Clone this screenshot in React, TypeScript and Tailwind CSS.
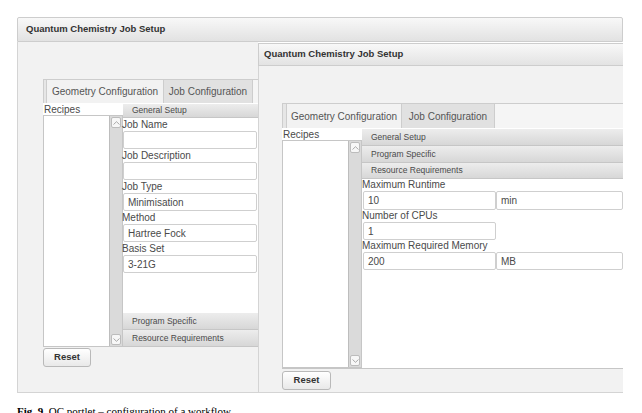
function Chevron({ up }: { up: boolean }) {
    return (
        <svg width="7" height="4" viewBox="0 0 7 4">
            <path d={up ? "M0.5 3.5L3.5 0.7L6.5 3.5" : "M0.5 0.5L3.5 3.3L6.5 0.5"} fill="none" stroke="#a0a0a0" strokeWidth="0.9" />
        </svg>
    )
}

function Scrollbar() {
    return (
        <div className="w-[13px] flex flex-col justify-between bg-[#dadada] border-l border-[#bdbdbd] p-px">
            <div className="h-[11px] rounded-[2px] border border-[#bcbcbc] bg-[#f7f7f7] flex items-center justify-center"><Chevron up /></div>
            <div className="h-[11px] rounded-[2px] border border-[#bcbcbc] bg-[#f7f7f7] flex items-center justify-center"><Chevron up={false} /></div>
        </div>
    )
}

function Recipes() {
    return (
        <div className="w-[80px] shrink-0 flex flex-col pt-px">
            <div className="h-[11px] bg-white text-[10px] leading-[11px] pl-px text-[#4a4a4a]">Recipes</div>
            <div className="flex-1 flex border border-[#c6c6c6] bg-white">
                <div className="flex-1" />
                <Scrollbar />
            </div>
        </div>
    )
}

function Section({ label, className }: { label: string; className: string }) {
    return (
        <div className={`${className} flex items-center pl-[9px] text-[8.5px] text-[#4a4a4a] bg-linear-to-b from-[#ededed] to-[#d7d7d7] border-b border-[#c6c6c6]`}>
            {label}
        </div>
    )
}

function Label({ text }: { text: string }) {
    return <div className="h-[12px] text-[10px] leading-[12px] text-[#4a4a4a] -ml-px">{text}</div>
}

function Input({ value, className }: { value: string; className: string }) {
    return (
        <div className={`${className} h-[18px] border border-[#cfcfcf] rounded-[2px] bg-white text-[10px] text-[#4a4a4a] flex items-center pl-[4px]`}>
            {value}
        </div>
    )
}

function TabStrip({ className, lead, first, second }: { className: string; lead: string; first: string; second: string }) {
    return (
        <div className={`${className} flex border-t border-[#cdcdcd] bg-[#f5f5f5] text-[10px] text-[#555]`}>
            <div className={`${lead} border-l border-r border-[#cdcdcd] bg-[#e6e6e6]`} />
            <div className={`${first} flex items-center justify-center bg-[#f2f2f2] border-r border-[#cdcdcd]`}>Geometry Configuration</div>
            <div className={`${second} flex items-center justify-center bg-[#e1e1e1] border-r border-[#cdcdcd]`}>Job Configuration</div>
            <div className="flex-1" />
        </div>
    )
}

function ResetButton({ className }: { className: string }) {
    return (
        <div className={`${className} h-[19px] rounded-[3px] border border-[#b9b9b9] bg-linear-to-b from-white to-[#e9e9e9] flex items-center justify-center text-[9.5px] font-bold text-[#333]`}>
            Reset
        </div>
    )
}

function LeftWindow() {
    return (
        <div className="w-[241px] shrink-0 bg-[#f2f2f2] border-l border-b border-[#d4d4d4] pl-[25px] pt-[37px] flex flex-col">
            <div className="w-[215px] flex flex-col">
                <TabStrip className="h-[24px]" lead="w-[4px]" first="w-[117px]" second="w-[89px]" />
                <div className="h-[244px] flex bg-white">
                    <Recipes />
                    <div className="flex-1 flex flex-col pt-px">
                        <Section label="General Setup" className="h-[14px]" />
                        <div className="h-[195px] flex flex-col pt-px pr-px">
                            <Label text="Job Name" />
                            <Input value="" className="mb-px" />
                            <Label text="Job Description" />
                            <Input value="" className="mb-px" />
                            <Label text="Job Type" />
                            <Input value="Minimisation" className="mb-px" />
                            <Label text="Method" />
                            <Input value="Hartree Fock" className="mb-px" />
                            <Label text="Basis Set" />
                            <Input value="3-21G" className="mb-px" />
                        </div>
                        <Section label="Program Specific" className="h-[17px]" />
                        <Section label="Resource Requirements" className="h-[17px]" />
                    </div>
                </div>
                <ResetButton className="w-[48px] mt-px" />
            </div>
        </div>
    )
}

function RightWindow() {
    return (
        <div className="flex-1 flex flex-col pt-px bg-white">
            <div className="h-[23px] flex items-center pl-[5px] border-t border-b border-l border-[#cdcdcd] bg-linear-to-b from-[#f8f8f8] to-[#e3e3e3] text-[9.5px] font-bold text-[#333]">
                Quantum Chemistry Job Setup
            </div>
            <div className="flex-1 bg-[#f2f2f2] border-l border-b border-[#d4d4d4] pl-[23px] pt-[37px] flex flex-col">
                <TabStrip className="h-[25px]" lead="w-[5px]" first="w-[115px]" second="w-[93px]" />
                <div className="h-[241px] flex bg-white border-b border-[#c6c6c6]">
                    <Recipes />
                    <div className="flex-1 flex flex-col pt-px">
                        <Section label="General Setup" className="h-[17px]" />
                        <Section label="Program Specific" className="h-[17px]" />
                        <Section label="Resource Requirements" className="h-[16px]" />
                        <div className="flex flex-col pl-px">
                            <Label text="Maximum Runtime" />
                            <div className="flex">
                                <Input value="10" className="w-[133px] h-[19px]" />
                                <Input value="min" className="flex-1 h-[19px]" />
                            </div>
                            <Label text="Number of CPUs" />
                            <Input value="1" className="w-[133px]" />
                            <Label text="Maximum Required Memory" />
                            <div className="flex">
                                <Input value="200" className="w-[133px]" />
                                <Input value="MB" className="flex-1" />
                            </div>
                        </div>
                    </div>
                </div>
                <ResetButton className="w-[49px] mt-[2px]" />
            </div>
        </div>
    )
}

export default function App() {
    return (
        <div className="w-[642px] h-[413px] overflow-hidden bg-white pl-[17px] pt-[17px] font-['Liberation_Sans',Arial,sans-serif]">
            <div className="w-[606px] flex flex-col">
                <div className="h-[25px] flex items-center pl-[8px] rounded-t-[2px] border border-[#cdcdcd] bg-linear-to-b from-[#f8f8f8] to-[#e2e2e2] text-[9.5px] font-bold text-[#333]">
                    Quantum Chemistry Job Setup
                </div>
                <div className="h-[351px] flex">
                    <LeftWindow />
                    <RightWindow />
                </div>
            </div>
            <p className="mt-[12px] text-[11px] leading-[13px] text-black font-['Liberation_Serif','Times_New_Roman',serif]">
                <span className="font-bold">Fig. 9.</span> QC portlet – configuration of a workflow
            </p>
        </div>
    )
}
